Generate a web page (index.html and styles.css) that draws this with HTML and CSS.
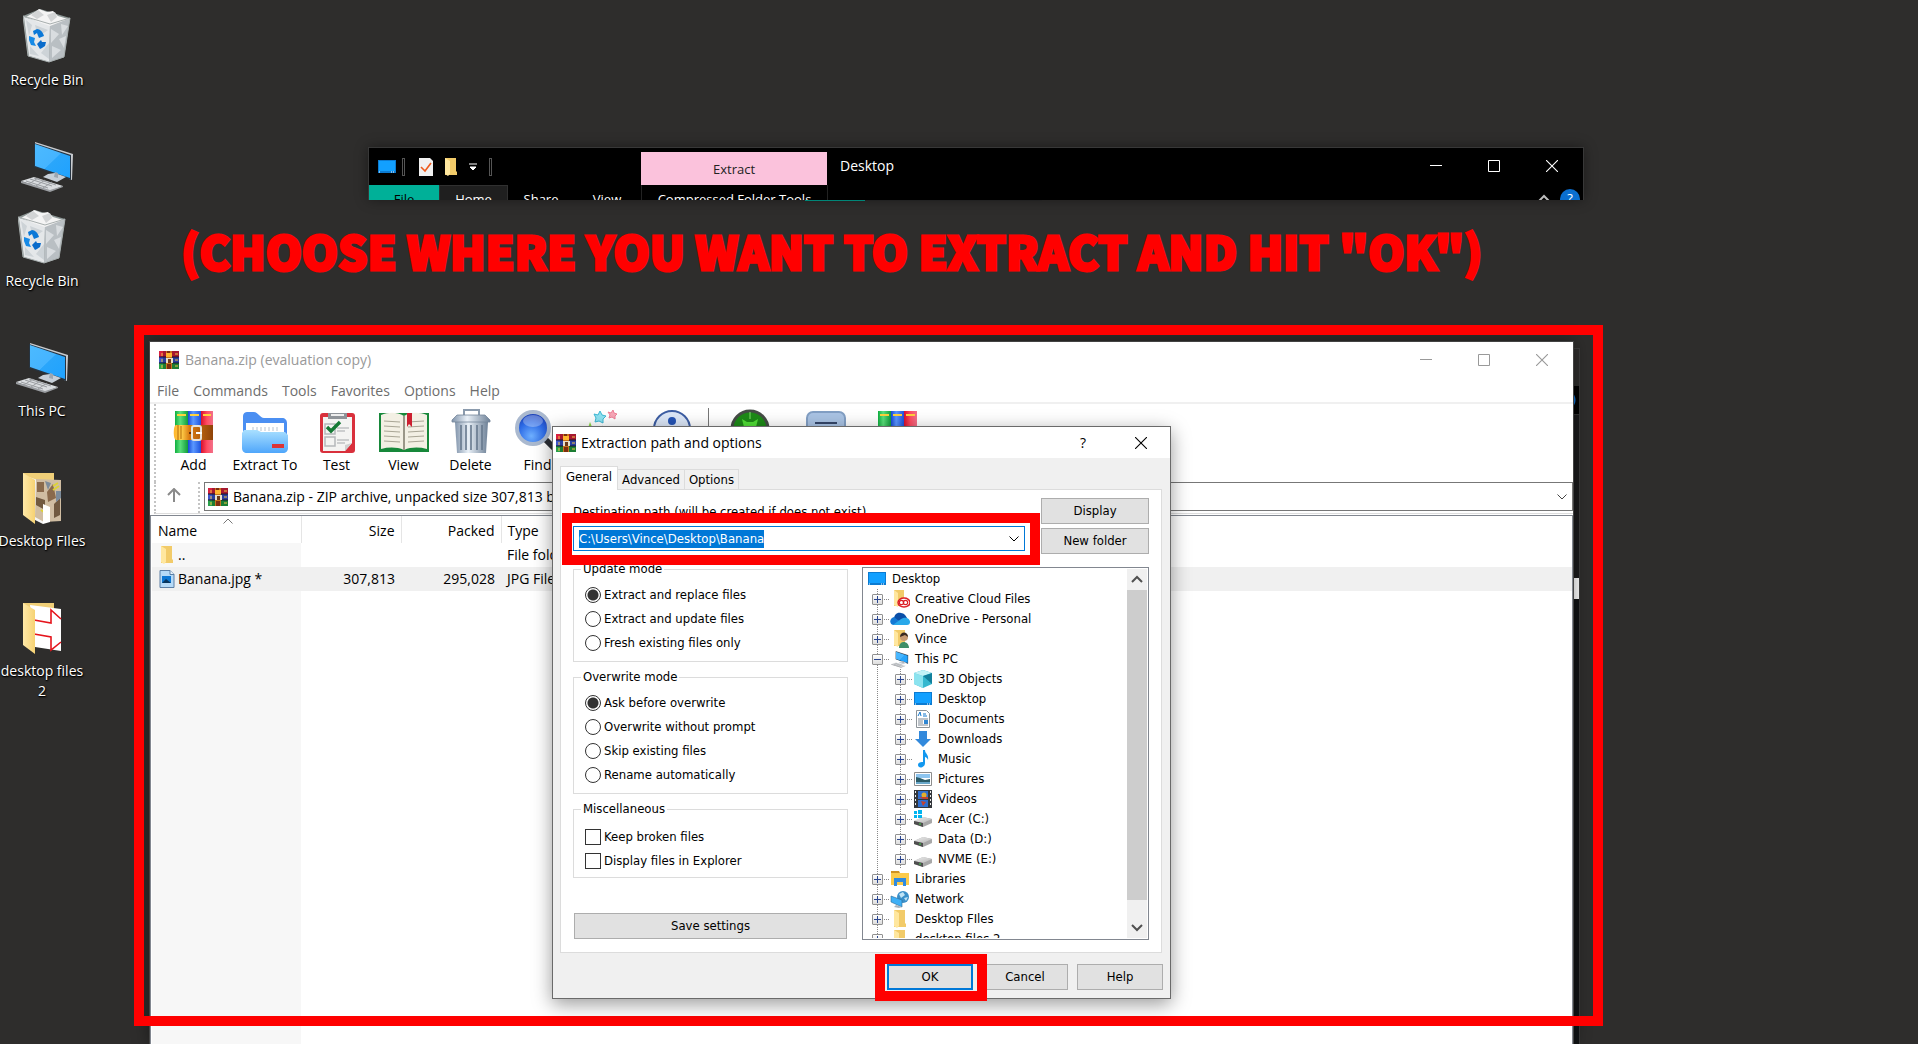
FILE: index.html
```html
<!DOCTYPE html>
<html lang="en">
<head>
    <meta charset="UTF-8">
    <meta name="viewport" content="width=device-width, initial-scale=1.0">
    <title>Extraction path and options</title>
    <link rel="stylesheet" href="styles.css">
</head>
<body>
    <!-- Shared icon shapes -->
    <svg class="sprite" width="0" height="0" aria-hidden="true">
        <defs>
            <linearGradient id="g-screen" x1="0" y1="0" x2="1" y2="1"><stop offset="0" stop-color="#4cbaff"/><stop offset=".5" stop-color="#45b4ff"/><stop offset=".51" stop-color="#2aa6fb"/><stop offset="1" stop-color="#1fa2ff"/></linearGradient>
            <linearGradient id="g-folder" x1="0" y1="0" x2="1" y2="0"><stop offset="0" stop-color="#ffe9a8"/><stop offset="1" stop-color="#f6d273"/></linearGradient>
            <linearGradient id="g-green" x1="0" y1="0" x2="1" y2="0"><stop offset="0" stop-color="#0fae3f"/><stop offset=".4" stop-color="#5be07b"/><stop offset="1" stop-color="#119a3b"/></linearGradient>
            <linearGradient id="g-blue" x1="0" y1="0" x2="1" y2="0"><stop offset="0" stop-color="#1749d8"/><stop offset=".4" stop-color="#5b98ff"/><stop offset="1" stop-color="#1e53dd"/></linearGradient>
            <linearGradient id="g-red" x1="0" y1="0" x2="1" y2="0"><stop offset="0" stop-color="#d90f2b"/><stop offset=".5" stop-color="#ff4d63"/><stop offset="1" stop-color="#f2718a"/></linearGradient>
            <linearGradient id="g-belt" x1="0" y1="0" x2="1" y2="0"><stop offset="0" stop-color="#ffb52b"/><stop offset=".2" stop-color="#ffcf4a"/><stop offset=".4" stop-color="#d97a10"/><stop offset="1" stop-color="#8f4309"/></linearGradient>
            <linearGradient id="g-ext" x1="0" y1="0" x2="0" y2="1"><stop offset="0" stop-color="#a9e0ff"/><stop offset="1" stop-color="#4fa6fb"/></linearGradient>
            <linearGradient id="g-metal" x1="0" y1="0" x2="1" y2="0"><stop offset="0" stop-color="#8194ab"/><stop offset=".4" stop-color="#e9f0f7"/><stop offset="1" stop-color="#6f8298"/></linearGradient>
            <radialGradient id="g-lens" cx=".45" cy=".75" r=".7"><stop offset="0" stop-color="#6fb0ff"/><stop offset=".6" stop-color="#2d6be6"/><stop offset="1" stop-color="#1b3fb5"/></radialGradient>
            <linearGradient id="g-drive" x1="0" y1="0" x2="1" y2="1"><stop offset="0" stop-color="#eee"/><stop offset="1" stop-color="#b5b5b5"/></linearGradient>

            <symbol id="i-bin" viewBox="0 0 48 54">
                <path d="M0 7l17-7 30 9-6 39-15 5-21-6z" fill="#8d9796"/>
                <path d="M1 8l26 8-1 37-20-6z" fill="#e4e7e9"/>
                <path d="M27 16l20-7-6 39-15 5z" fill="#b9bfc3"/>
                <path d="M3 8l9-5 4-3 8 3 6-1 5 5 10 3-18 7-12-4z" fill="#f4f4f4"/>
                <path d="M8 6l7-5 6 5-7 4zM24 6l8-3 2 5-6 5z" fill="#d2d4d5"/>
                <path d="M3 11l6 5-3 11zM12 16l13 5-10 7zM7 37l9 10-9-2zM18 44l8-10v16z" fill="#cdd3d7"/>
                <path d="M28 20l8 5-8 9zM38 15l7 2-6 9zM29 37l9 4-9 8zM36 30l7-3-2 12z" fill="#d9dde0"/>
                <path d="M0 7l27 8 20-6-6 39-15 5-21-6z" fill="none" stroke="#a7aeae" stroke-width="1"/>
                <path d="M10 22l4-2c3 0 6 3 7 7l-5 2-2-5-3 2z" fill="#0a78d7"/>
                <path d="M6 27l6 2-1 4 2 4-5-1-2-5z" fill="#168ae6"/>
                <path d="M14 35l4-4 1 2h4l-1 4-3 2-2 1z" fill="#0a6ccb"/>
            </symbol>
            <symbol id="i-pc" viewBox="0 0 54 54">
                <path d="M15 3l38 12-1 26-3-1V17L15 6z" fill="#c9ccd0"/>
                <path d="M14 4l37 12v25L14 28z" fill="#263442"/>
                <path d="M15 5l35 12v22L15 27z" fill="url(#g-screen)"/>
                <path d="M28 35l7-1 11 4-9 5-14-5z" fill="#c7cfd8"/>
                <path d="M35 33l3 1v5l-4-1z" fill="#9da6b0"/>
                <path d="M1 42l13-4 29 9-13 5z" fill="#dadde0"/>
                <path d="M6 42l22 7M10 40l22 7M14 39l22 7M9 45l9-6M16 47l9-6M23 49l9-6" stroke="#9a9da1" stroke-width="1" fill="none"/>
                <path d="M1 42l29 9 13-4v1l-13 5-29-9z" fill="#9b9ea2"/>
            </symbol>
            <symbol id="i-files" viewBox="0 0 54 54">
                <path d="M8 3h31v40H8z" fill="#f0cf78"/>
                <path d="M14 7l14 5v42l-14-7z" fill="#f4f4f4"/>
                <path d="M21 9l25 1v41l-17 1-9-5z" fill="#d0bda2"/>
                <path d="M22 12h7v10h-7zM32 22l6-8 3 14-8 4z" fill="#8a6a4c"/>
                <path d="M21 27l9 3v10l-9-5zM39 34l6-6v17l-6 3z" fill="#715940"/>
                <path d="M30 11l6 2-3 7zM41 21h5v7l-5 4z" fill="#7d8b9a"/>
                <path d="M38 16l5-3M38 20l6-4M26 40l6 4" stroke="#ddd234" stroke-width="2"/>
                <path d="M28 34l7 3v15l-7 2z" fill="#fff"/>
                <path d="M8 3l12 7v44L8 45z" fill="url(#g-folder)"/>
            </symbol>
            <symbol id="i-files2" viewBox="0 0 54 54">
                <path d="M8 3h31v40H8z" fill="#f0cf78"/>
                <path d="M15 5l31 4v42l-26-4z" fill="#fff"/>
                <path d="M19 20l17 3V10l10 9M19 34l17 3v13l10-8" fill="none" stroke="#e5141c" stroke-width="1.6"/>
                <path d="M8 3l12 7v44L8 45z" fill="url(#g-folder)"/>
            </symbol>
            <symbol id="i-folder" viewBox="0 0 18 18">
                <path d="M3 0h11v13l1 1v3H3z" fill="#f2cb69"/>
                <path d="M3 0l5 3v13l-2 2-3-2z" fill="#ffe79f"/>
            </symbol>
            <symbol id="i-screen" viewBox="0 0 18 14">
                <path d="M0 0h18v13H0z" fill="#0c7bd1"/><path d="M1 1h16v10H1z" fill="#12a0ff"/>
                <path d="M1 12h1M13 12h1M15 12h1" stroke="#fff"/>
            </symbol>
            <symbol id="i-rar" viewBox="0 0 20 18">
                <path d="M0 0h20v6H0z" fill="#a5182f"/><path d="M0 6h20v6H0z" fill="#2b3f9e"/><path d="M0 12h20v6H0z" fill="#1c7d33"/>
                <path d="M0 0h4v6H0z" fill="#d8213f"/><path d="M0 6h4v6H0z" fill="#3e55c9"/><path d="M0 12h4v6H0z" fill="#2aa04a"/>
                <path d="M0 6h20M0 12h20" stroke="#15152a" stroke-width="1"/>
                <path d="M7 0h6v18H7z" fill="#c9741d"/><path d="M8 0h3v3H8zM8 13h4v5H8z" fill="#7d2e10"/>
                <path d="M7 7h7v5H7z" fill="#e8e0cc"/><path d="M9 8h3v4H9z" fill="#6b3a1a"/>
                <path d="M7 2h6v4H7z" fill="#ffb62e"/>
                <path d="M3 2v3M3 8v3M3 14v3M16 3h3M16 9h3M16 15h3" stroke="#f4c542" stroke-width="1"/>
            </symbol>
            <symbol id="i-add" viewBox="0 0 52 46">
                <path d="M7 2h13v42H7z" fill="url(#g-green)"/><path d="M20 2h13v42H20z" fill="url(#g-blue)"/><path d="M33 2h12v42H33z" fill="url(#g-red)"/>
                <path d="M9 6h9M22 6h9M35 6h8" stroke="#ffd23c" stroke-width="2"/>
                <path d="M8 16h37v15H8c-3 0-3-15 0-15z" fill="url(#g-belt)"/>
                <path d="M10 16v15M13 17v13" stroke="#b36908"/>
                <circle cx="22" cy="24" r="1" fill="#4a1e00"/>
                <rect x="24" y="17" width="9" height="14" rx="2" fill="none" stroke="#e8e3da" stroke-width="2"/>
                <path d="M28 24h6" stroke="#fff" stroke-width="2"/>
            </symbol>
            <symbol id="i-extract" viewBox="0 0 52 46">
                <path d="M4 8c0-4 2-5 5-5h6c4 0 6 6 10 6h18c3 0 5 2 5 5v22H4z" fill="#4b8ff2"/>
                <path d="M7 14h38v14H7z" fill="#fff"/><path d="M14 18v4M18 18v4M22 18v4M26 18v4M30 18v4M34 18v4M38 18v4" stroke="#b9c4cf"/>
                <path d="M3 24l2-3h13l4 2h24l3 3v13c0 3-2 5-5 5H8c-3 0-5-2-5-5z" fill="url(#g-ext)"/>
                <path d="M33 35h12v4H33z" fill="#dd3434"/>
            </symbol>
            <symbol id="i-test" viewBox="0 0 52 46">
                <rect x="9" y="4" width="35" height="40" rx="3" fill="#d9303c"/>
                <path d="M12 8h29v26l-7 8H12z" fill="#f4f4f2"/><path d="M34 42v-6l7-2z" fill="#cfcfcf"/>
                <path d="M17 4h19v6H17z" fill="#8f9499"/><path d="M20 6h13" stroke="#eee" stroke-width="2"/>
                <path d="M14 15h10v10H14zM14 28h10v9H14z" fill="none" stroke="#b5b8bb" stroke-width="1.5"/>
                <path d="M16 18l4 4 9-9" fill="none" stroke="#157a35" stroke-width="3.4"/>
                <path d="M26 19h12M26 22h8M26 31h12M26 34h8" stroke="#a5a8ab"/>
            </symbol>
            <symbol id="i-view" viewBox="0 0 52 46">
                <path d="M1 4h50v39H1z" fill="#17883a"/>
                <path d="M3 6c8-3 16-3 23 1v34c-7-3-15-3-23-1zM49 6c-8-3-16-3-23 1v34c7-3 15-3 23-1z" fill="#f3f0e4"/>
                <path d="M26 7v34" stroke="#9a9788" stroke-width="2"/>
                <path d="M6 12l16 1M6 17l16 1M6 22l16 1M6 27l16 1M6 32l16 1M30 13l16-1M30 18l16-1M30 23l16-1M30 28l16-1M30 33l16-1" stroke="#a9a695"/>
                <path d="M29 4h5v14l-3-3-2 3z" fill="#cc2030"/>
            </symbol>
            <symbol id="i-delete" viewBox="0 0 52 46">
                <path d="M19 7V1h15v6" fill="none" stroke="#8b9bad" stroke-width="2"/>
                <path d="M10 13h33l-2 31H12z" fill="url(#g-metal)"/>
                <path d="M16 16v25M21 16v25M26 16v25M32 16v25M37 16v25" stroke="#66788d" stroke-width="1.6"/>
                <path d="M12 6h28l5 5v2H7v-2z" fill="url(#g-metal)" stroke="#73859a" stroke-width=".8"/>
            </symbol>
            <symbol id="i-find" viewBox="0 0 52 46">
                <path d="M33 30l12 12" stroke="#2c2f36" stroke-width="6"/><circle cx="21" cy="19" r="16" fill="url(#g-lens)" stroke="#aab9cf" stroke-width="4"/>
                <ellipse cx="21" cy="12" rx="10" ry="6" fill="#fff" opacity=".3"/>
            </symbol>
            <symbol id="i-wizard" viewBox="0 0 52 46">
                <path d="M21 2l2 4 4 1-3 3v4l-4-2-4 1 1-4-2-4 4 1z" fill="#8fe3f2" stroke="#3cb8d5"/>
                <path d="M34 1l1 3 3 1-2 2v3l-3-2-3 1 1-3-2-3 3 1z" fill="#f7a8b8" stroke="#ee7f96"/>
                <path d="M11 13l2 5 5 1-5 4-4-4z" fill="#8edb49"/><path d="M22 18L44 42" stroke="#333" stroke-width="4"/>
            </symbol>
            <symbol id="i-info" viewBox="0 0 52 46">
                <circle cx="26" cy="20" r="18" fill="#dbe6f7" stroke="#3c5da3" stroke-width="2"/><circle cx="26" cy="12" r="4" fill="#2453b5"/><path d="M20 20h10v16h-8z" fill="#2453b5"/>
            </symbol>
            <symbol id="i-virus" viewBox="0 0 52 46">
                <circle cx="26" cy="20" r="18" fill="#1d8a17" stroke="#454c46" stroke-width="3"/><path d="M26 3v7" stroke="#80df6c"/><path d="M18 10l5 3h6l5-3-2 8H20z" fill="#50df36"/>
            </symbol>
            <symbol id="i-comment" viewBox="0 0 52 46">
                <rect x="7" y="3" width="38" height="34" rx="6" fill="#a9c3e4" stroke="#829fc4" stroke-width="2"/><path d="M15 14h22" stroke="#35476a" stroke-width="2"/>
            </symbol>
            <symbol id="i-sfx" viewBox="0 0 52 46">
                <path d="M6 2h13v42H6z" fill="url(#g-green)"/><path d="M19 2h13v42H19z" fill="url(#g-blue)"/><path d="M32 2h13v42H32z" fill="url(#g-red)"/><path d="M8 6h9M21 6h9M34 6h9" stroke="#ffd23c" stroke-width="2"/>
            </symbol>
            <symbol id="i-jpg" viewBox="0 0 18 18">
                <path d="M2 .5h10l4 4v13H2z" fill="#b6daf7" stroke="#5c7fa5"/><path d="M12 .5v4h4" fill="#e8f4fd" stroke="#5c7fa5"/><path d="M4 6h9v7H4z" fill="#0e77d3"/><path d="M4 13l4-4 5 4z" fill="#08365f"/>
            </symbol>
            <symbol id="i-cc" viewBox="0 0 20 18">
                <path d="M4 0h10v16H4z" fill="#f2cb69"/><path d="M4 0l4 3v14l-4-2z" fill="#ffe79f"/>
                <ellipse cx="14" cy="12.500" rx="6" ry="4.500" fill="#fff" stroke="#dc1f26" stroke-width="1.500"/><circle cx="11.500" cy="12.500" r="2.200" fill="none" stroke="#dc1f26" stroke-width="1.200"/><circle cx="15.500" cy="12.500" r="2.200" fill="none" stroke="#dc1f26" stroke-width="1.200"/>
            </symbol>
            <symbol id="i-onedrive" viewBox="0 0 20 18">
                <path d="M4 9c0-4 3-7 7-6 3 0 5 3 6 5l-6 4z" fill="#0a4fa8"/><path d="M4 15c-5 0-5-7 0-8l10 8z" fill="#1478d4"/><path d="M3 15l8-6c5-3 9 0 9 3 0 2-1 3-3 3z" fill="#28a8ea"/>
            </symbol>
            <symbol id="i-user" viewBox="0 0 20 18">
                <path d="M4 0h11v16H4z" fill="#f2cb69"/><path d="M4 0l4 3v14l-4-2z" fill="#ffe79f"/>
                <path d="M9 18c0-5 3-6 5-6s5 2 5 6z" fill="#3f8f68"/><circle cx="14" cy="7" r="4" fill="#c79a72"/><path d="M10 7c0-6 8-6 8 0l-3-2z" fill="#3a2a22"/>
            </symbol>
            <symbol id="i-cube" viewBox="0 0 18 18">
                <path d="M9 0l9 3v11l-9 4-9-4V3z" fill="#35b8cf"/><path d="M0 3l9 3v12l-9-4z" fill="#8be3ef"/><path d="M0 3l9-3 9 3-9 3z" fill="#c2f2f7"/><path d="M9 6l9-3v11z" fill="#12809d"/>
            </symbol>
            <symbol id="i-doc" viewBox="0 0 18 18">
                <path d="M2.500.5h10l3 3v14h-13z" fill="#fff" stroke="#8d9499"/><path d="M4 6l2-4 1 4M9 4h3M9 6h4" stroke="#1377cc" fill="none"/><path d="M4 9h10M4 11h5M4 13h5M4 15h10" stroke="#7d8894"/><path d="M10 10h4v4h-4z" fill="#2d86d3"/>
            </symbol>
            <symbol id="i-down" viewBox="0 0 18 18"><path d="M5 1h8v8h4l-8 8-8-8h4z" fill="#3289dc"/></symbol>
            <symbol id="i-music" viewBox="0 0 18 18"><path d="M9 0h2c0 4 4 4 3 10-1-3-3-3-3-3v6c0 5-7 6-7 2 0-3 4-3 5-3z" fill="#1398ef"/></symbol>
            <symbol id="i-pic" viewBox="0 0 18 14"><path d="M.5.5h17v13H.5z" fill="#fff" stroke="#8d8d8d"/><path d="M2 2h14v4H2z" fill="#8ec5ef"/><path d="M2 5l4 1 5 2 5-1v5H2z" fill="#2b5c68"/><path d="M2 10h14v2H2z" fill="#6ba9cb"/></symbol>
            <symbol id="i-video" viewBox="0 0 18 18">
                <path d="M0 0h18v18H0z" fill="#33373c"/><path d="M4 1h10v8H4zM4 10h10v7H4z" fill="#2f6fd0"/><circle cx="10" cy="5" r="2.500" fill="#e5ae2b"/><path d="M5 7l4 2h5V7zM7 11l5 1-3 4z" fill="#c5412f"/><path d="M1.500 1v16M16.500 1v16" stroke="#eee" stroke-dasharray="2 2"/>
            </symbol>
            <symbol id="i-drive" viewBox="0 0 18 18"><path d="M0 11l9-4 9 2v4l-9 4-9-3z" fill="#a8a8a8"/><path d="M0 11l9-4 9 2-9 4z" fill="url(#g-drive)"/><path d="M0 11l9 2v4l-9-3z" fill="#4e4e4e"/><path d="M5 14h2" stroke="#42d34a"/></symbol>
            <symbol id="i-cdrive" viewBox="0 0 18 18"><use href="#i-drive" width="18" height="18"/><path d="M0 1h3v3H0zM4 0h4v4H4zM0 5h3v3H0zM4 5h4v3H4z" fill="#00b4f0"/></symbol>
            <symbol id="i-lib" viewBox="0 0 18 18"><path d="M0 1h8l1 2H0z" fill="#d09323"/><path d="M0 3h18v12H0z" fill="#fccb4b"/><path d="M3 8h12v8h-3v-4H6v4H3z" fill="#2f8be0"/></symbol>
            <symbol id="i-net" viewBox="0 0 18 18"><circle cx="12" cy="7" r="6" fill="#3a8fc9"/><path d="M8 4l4-2 2 3-4 3zM13 8l4-1-2 4z" fill="#bfe3f5"/><path d="M0 6l11 4v7L0 12z" fill="#3eb0f7" stroke="#2d6b96" stroke-width=".6"/><path d="M5 15l6 2-3 1-5-1z" fill="#aab4bd"/></symbol>

            <symbol id="i-min" viewBox="0 0 12 12"><path d="M0 5.500h12" stroke="currentColor"/></symbol>
            <symbol id="i-max" viewBox="0 0 12 12"><path d="M.5.5h11v11H.5z" stroke="currentColor" fill="none"/></symbol>
            <symbol id="i-close" viewBox="0 0 12 12"><path d="M0 0l12 12M12 0L0 12" stroke="currentColor" stroke-width="1.100"/></symbol>
            <symbol id="i-chev" viewBox="0 0 10 6"><path d="M.5.5L5 5 9.500.5" stroke="currentColor" fill="none"/></symbol>
        </defs>
    </svg>

    <main class="desktop">
        <div class="icons icons-back">
            <a class="icon" href="#"><svg width="48" height="54"><use href="#i-bin"/></svg><span>Recycle Bin</span></a>
            <a class="icon" href="#" aria-label="This PC"><svg width="54" height="54"><use href="#i-pc"/></svg></a>
        </div>
        <div class="icons icons-front">
            <a class="icon" href="#"><svg width="48" height="54"><use href="#i-bin"/></svg><span>Recycle Bin</span></a>
            <a class="icon" href="#"><svg width="54" height="54"><use href="#i-pc"/></svg><span>This PC</span></a>
            <a class="icon" href="#"><svg width="54" height="54"><use href="#i-files"/></svg><span>Desktop FIles</span></a>
            <a class="icon" href="#"><svg width="54" height="54"><use href="#i-files2"/></svg><span>desktop files<br>2</span></a>
        </div>

        <!-- Explorer window -->
        <section class="explorer">
            <div class="explorer-title">
                <div class="quick">
                    <svg width="18" height="14"><use href="#i-screen"/></svg>
                    <i class="bar"></i>
                    <svg class="check" width="14" height="18" viewBox="0 0 14 18"><path d="M0 0h11l3 3v15H0z" fill="#f1f1f1"/><path d="M2 9l4 4 6-8" fill="none" stroke="#ee5a1c" stroke-width="1.600"/></svg>
                    <svg width="18" height="18"><use href="#i-folder"/></svg>
                    <svg width="8" height="8" viewBox="0 0 8 8"><path d="M0 1h8M1 4h6L4 7z" stroke="#fff" fill="#fff" stroke-width="1"/></svg>
                    <i class="bar"></i>
                </div>
                <div class="extract-tab">Extract</div>
                <div class="explorer-name">Desktop</div>
                <div class="win-buttons">
                    <button aria-label="Minimize"><svg width="12" height="12"><use href="#i-min"/></svg></button>
                    <button aria-label="Maximize"><svg width="12" height="12"><use href="#i-max"/></svg></button>
                    <button aria-label="Close"><svg width="12" height="12"><use href="#i-close"/></svg></button>
                </div>
            </div>
            <nav class="ribbon">
                <a class="file" href="#">File</a>
                <a class="home" href="#">Home</a>
                <a href="#">Share</a>
                <a href="#">View</a>
                <a class="tools" href="#">Compressed Folder Tools</a>
                <svg class="up" width="12" height="8" viewBox="0 0 12 8"><path d="M1 7l5-5 5 5" fill="none" stroke="#bbb" stroke-width="2"/></svg>
                <span class="help">?</span>
            </nav>
        </section>
        <div class="ribbon-line"></div>

        <h1 class="headline">(CHOOSE WHERE YOU WANT TO EXTRACT AND HIT "OK")</h1>

        <div class="behind"><div class="behind-ribbon"></div><div class="behind-body"></div><div class="behind-scroll"></div></div>

        <!-- Archive window -->
        <section class="archive">
            <header class="archive-title">
                <svg width="20" height="18"><use href="#i-rar"/></svg>
                <span>Banana.zip (evaluation copy)</span>
                <div class="win-buttons">
                    <button aria-label="Minimize"><svg width="12" height="12"><use href="#i-min"/></svg></button>
                    <button aria-label="Maximize"><svg width="12" height="12"><use href="#i-max"/></svg></button>
                    <button aria-label="Close"><svg width="12" height="12"><use href="#i-close"/></svg></button>
                </div>
            </header>
            <nav class="menu">
                <a href="#">File</a><a href="#">Commands</a><a href="#">Tools</a><a href="#">Favorites</a><a href="#">Options</a><a href="#">Help</a>
            </nav>
            <div class="toolbar">
                <button><svg width="52" height="46"><use href="#i-add"/></svg>Add</button>
                <button class="wide"><svg width="52" height="46"><use href="#i-extract"/></svg>Extract To</button>
                <button><svg width="52" height="46"><use href="#i-test"/></svg>Test</button>
                <button><svg width="52" height="46"><use href="#i-view"/></svg>View</button>
                <button><svg width="52" height="46"><use href="#i-delete"/></svg>Delete</button>
                <button><svg width="52" height="46"><use href="#i-find"/></svg>Find</button>
                <button aria-label="Wizard"><svg width="52" height="46"><use href="#i-wizard"/></svg></button>
                <button aria-label="Info"><svg width="52" height="46"><use href="#i-info"/></svg></button>
                <i class="sep"></i>
                <button class="wide" aria-label="VirusScan"><svg width="52" height="46"><use href="#i-virus"/></svg></button>
                <button class="wide" aria-label="Comment"><svg width="52" height="46"><use href="#i-comment"/></svg></button>
                <button aria-label="SFX"><svg width="52" height="46"><use href="#i-sfx"/></svg></button>
            </div>
            <div class="address-row">
                <button class="up-button" aria-label="Up"><svg width="14" height="15" viewBox="0 0 14 15"><path d="M7 14V1M1 7l6-6 6 6" fill="none" stroke="#8a8a8a" stroke-width="2"/></svg></button>
                <div class="address">
                    <svg width="20" height="18"><use href="#i-rar"/></svg>
                    <select aria-label="Address"><option>Banana.zip - ZIP archive, unpacked size 307,813 bytes</option></select>
                    <svg class="chev" width="10" height="6"><use href="#i-chev"/></svg>
                </div>
            </div>
            <div class="list">
                <table class="files">
                    <colgroup><col class="c-name"><col class="c-num"><col class="c-num"><col></colgroup>
                    <thead>
                        <tr><th>Name<svg class="sort" width="10" height="6" viewBox="0 0 10 6"><path d="M.5 5.500L5 1l4.500 4.500" fill="none" stroke="#777"/></svg></th><th class="num">Size</th><th class="num">Packed</th><th>Type</th></tr>
                    </thead>
                    <tbody>
                        <tr><td><svg width="18" height="18"><use href="#i-folder"/></svg>..</td><td></td><td></td><td>File folder</td></tr>
                        <tr class="selected"><td><svg width="18" height="18"><use href="#i-jpg"/></svg>Banana.jpg *</td><td class="num">307,813</td><td class="num">295,028</td><td>JPG File</td></tr>
                    </tbody>
                </table>
                <div class="name-fill"></div>
            </div>
        </section>

        <div class="frame"></div>

        <!-- Extraction dialog -->
        <form class="dialog">
            <header class="dialog-title">
                <svg width="20" height="18"><use href="#i-rar"/></svg>
                <span>Extraction path and options</span>
                <button type="button">?</button>
                <button type="button" aria-label="Close"><svg width="12" height="12"><use href="#i-close"/></svg></button>
            </header>
            <div class="dialog-body">
                <div class="tabs">
                    <button type="button" class="tab active">General</button>
                    <button type="button" class="tab">Advanced</button>
                    <button type="button" class="tab">Options</button>
                </div>
                <div class="panel">
                    <div class="path-row">
                        <div class="path">
                            <label for="path">Destination path (will be created if does not exist)</label>
                            <div class="combo">
                                <input type="text" id="path" value="C:\Users\Vince\Desktop\Banana">
                                <button type="button" aria-label="Recent paths"><svg width="10" height="6"><use href="#i-chev"/></svg></button>
                                <i class="mark mark-path"></i>
                            </div>
                        </div>
                        <div class="path-buttons">
                            <button type="button" class="btn">Display</button>
                            <button type="button" class="btn">New folder</button>
                        </div>
                    </div>
                    <div class="columns">
                        <div class="settings">
                            <fieldset>
                                <legend>Update mode</legend>
                                <label><input type="radio" name="update" checked>Extract and replace files</label>
                                <label><input type="radio" name="update">Extract and update files</label>
                                <label><input type="radio" name="update">Fresh existing files only</label>
                            </fieldset>
                            <fieldset>
                                <legend>Overwrite mode</legend>
                                <label><input type="radio" name="overwrite" checked>Ask before overwrite</label>
                                <label><input type="radio" name="overwrite">Overwrite without prompt</label>
                                <label><input type="radio" name="overwrite">Skip existing files</label>
                                <label><input type="radio" name="overwrite">Rename automatically</label>
                            </fieldset>
                            <fieldset class="misc">
                                <legend>Miscellaneous</legend>
                                <label><input type="checkbox">Keep broken files</label>
                                <label><input type="checkbox">Display files in Explorer</label>
                            </fieldset>
                            <button type="button" class="btn save">Save settings</button>
                        </div>
                        <div class="tree-box">
                            <div class="tree">
                                <div class="root"><svg width="18" height="14"><use href="#i-screen"/></svg>Desktop</div>
                                <ul>
                                    <li><div class="node"><button type="button" class="plus" aria-label="Expand"></button><svg width="20" height="18"><use href="#i-cc"/></svg>Creative Cloud Files</div></li>
                                    <li><div class="node"><button type="button" class="plus" aria-label="Expand"></button><svg width="20" height="18"><use href="#i-onedrive"/></svg>OneDrive - Personal</div></li>
                                    <li><div class="node"><button type="button" class="plus" aria-label="Expand"></button><svg width="20" height="18"><use href="#i-user"/></svg>Vince</div></li>
                                    <li>
                                        <div class="node"><button type="button" class="plus minus" aria-label="Collapse"></button><svg width="20" height="18"><use href="#i-pc"/></svg>This PC</div>
                                        <ul>
                                            <li><div class="node"><button type="button" class="plus" aria-label="Expand"></button><svg width="20" height="18"><use href="#i-cube"/></svg>3D Objects</div></li>
                                            <li><div class="node"><button type="button" class="plus" aria-label="Expand"></button><svg width="20" height="14"><use href="#i-screen"/></svg>Desktop</div></li>
                                            <li><div class="node"><button type="button" class="plus" aria-label="Expand"></button><svg width="20" height="18"><use href="#i-doc"/></svg>Documents</div></li>
                                            <li><div class="node"><button type="button" class="plus" aria-label="Expand"></button><svg width="20" height="18"><use href="#i-down"/></svg>Downloads</div></li>
                                            <li><div class="node"><button type="button" class="plus" aria-label="Expand"></button><svg width="20" height="18"><use href="#i-music"/></svg>Music</div></li>
                                            <li><div class="node"><button type="button" class="plus" aria-label="Expand"></button><svg width="20" height="14"><use href="#i-pic"/></svg>Pictures</div></li>
                                            <li><div class="node"><button type="button" class="plus" aria-label="Expand"></button><svg width="20" height="18"><use href="#i-video"/></svg>Videos</div></li>
                                            <li><div class="node"><button type="button" class="plus" aria-label="Expand"></button><svg width="20" height="18"><use href="#i-cdrive"/></svg>Acer (C:)</div></li>
                                            <li><div class="node"><button type="button" class="plus" aria-label="Expand"></button><svg width="20" height="18"><use href="#i-drive"/></svg>Data (D:)</div></li>
                                            <li><div class="node"><button type="button" class="plus" aria-label="Expand"></button><svg width="20" height="18"><use href="#i-drive"/></svg>NVME (E:)</div></li>
                                        </ul>
                                    </li>
                                    <li><div class="node"><button type="button" class="plus" aria-label="Expand"></button><svg width="20" height="18"><use href="#i-lib"/></svg>Libraries</div></li>
                                    <li><div class="node"><button type="button" class="plus" aria-label="Expand"></button><svg width="20" height="18"><use href="#i-net"/></svg>Network</div></li>
                                    <li><div class="node"><button type="button" class="plus" aria-label="Expand"></button><svg width="20" height="18"><use href="#i-folder"/></svg>Desktop FIles</div></li>
                                    <li><div class="node"><button type="button" class="plus" aria-label="Expand"></button><svg width="20" height="18"><use href="#i-folder"/></svg>desktop files 2</div></li>
                                </ul>
                            </div>
                            <div class="scrollbar">
                                <svg width="12" height="8" viewBox="0 0 12 8"><path d="M1 7l5-5 5 5" fill="none" stroke="#505050" stroke-width="2"/></svg>
                                <i></i>
                                <svg width="12" height="8" viewBox="0 0 12 8"><path d="M1 1l5 5 5-5" fill="none" stroke="#505050" stroke-width="2"/></svg>
                            </div>
                        </div>
                    </div>
                </div>
                <div class="footer">
                    <div class="ok-wrap"><button type="button" class="btn ok">OK</button><i class="mark mark-ok"></i></div>
                    <button type="button" class="btn">Cancel</button>
                    <button type="button" class="btn">Help</button>
                </div>
            </div>
        </form>
    </main>
</body>
</html>
```
FILE: styles.css
```css
:root {
    --desk: #2e2d2c;
    --red: #ff0000;
    --line: #dcdcdc;
    --ui: "Segoe UI", "Open Sans", "Noto Sans", sans-serif;
    --small: Tahoma, "DejaVu Sans Condensed", "Noto Sans", sans-serif;
}

* {
    box-sizing: border-box;
    margin: 0;
    padding: 0;
}

body {
    background-color: var(--desk);
    font-family: var(--ui);
    font-size: 14px;
    line-height: 20px;
    color: #000;
}

a {
    color: inherit;
    text-decoration: none;
}

button, input, select {
    font: inherit;
    color: inherit;
    border: none;
    background: none;
}

svg {
    flex: none;
}

.sprite {
    position: absolute;
}

.desktop {
    position: relative;
    height: 100vh;
    overflow: hidden;
}

/* Desktop icons */
.icons {
    position: absolute;
    display: grid;
    grid-auto-rows: 130px;
    width: 88px;
}

.icons-back {
    left: 3px;
    top: 9px;
    height: 191px;
    overflow: hidden;
}

.icons-front {
    left: -2px;
    top: 210px;
}

.icon {
    display: flex;
    flex-direction: column;
    align-items: center;
    gap: 7px;
    color: #fff;
    text-align: center;
    white-space: nowrap;
    text-shadow: 1px 1px 2px #000, 0 1px 1px #000;
}

/* Explorer window */
.explorer {
    position: absolute;
    left: 368px;
    right: 334px;
    top: 147px;
    height: 53px;
    overflow: hidden;
    background-color: #000;
    border: 1px solid #383838;
    border-bottom: none;
    color: #fff;
    box-shadow: 0 0 12px rgba(0, 0, 0, 0.4);
}

.explorer-title {
    display: flex;
    align-items: flex-end;
    height: 37px;
}

.quick {
    display: flex;
    align-items: center;
    gap: 9px;
    width: 272px;
    height: 37px;
    padding-left: 9px;
}

.quick .bar {
    width: 3px;
    height: 18px;
    margin-left: -3px;
    border: 1px solid #555;
}

.quick .check {
    margin-left: 5px;
}

.quick .bar:last-child {
    margin-left: 3px;
}

.extract-tab {
    width: 186px;
    height: 33px;
    background-color: #fbc2dc;
    color: #222;
    font-size: 13px;
    line-height: 35px;
    text-align: center;
}

.explorer-name {
    height: 37px;
    padding-left: 13px;
    line-height: 36px;
}

.win-buttons {
    display: flex;
    align-items: center;
    height: 36px;
    margin-left: auto;
    padding-right: 2px;
}

.explorer .win-buttons {
    align-self: flex-start;
}

.win-buttons button {
    display: grid;
    place-items: center;
    width: 58px;
    height: 36px;
}

.ribbon {
    display: flex;
    height: 38px;
    font-size: 13px;
    line-height: 28px;
    text-align: center;
}

.ribbon a {
    width: 66px;
}

.ribbon a.file {
    width: 70px;
    background-color: #00b098;
    color: #000;
}

.ribbon a.home {
    width: 69px;
    background-color: #1f1f1f;
    border: 1px solid #303030;
    line-height: 26px;
}

.ribbon a.tools {
    width: 187px;
    margin-left: 1px;
    border: 1px solid #222;
    border-top: none;
}

.ribbon .up {
    margin: 9px 10px 0 auto;
}

.ribbon .help {
    width: 20px;
    height: 20px;
    margin: 4px 3px 0 0;
    border-radius: 50%;
    background-color: #0a6fd0;
    line-height: 19px;
}

.ribbon-line {
    position: absolute;
    left: 805px;
    top: 200px;
    width: 237px;
    height: 1px;
    background: linear-gradient(to right, #008577 60px, #222 60px);
}

.headline {
    position: absolute;
    left: 181px;
    top: 200px;
    color: var(--red);
    font-family: Impact, "Noto Sans CJK JP", sans-serif;
    font-size: 46px;
    font-weight: 900;
    line-height: 100px;
    white-space: nowrap;
    -webkit-text-stroke: 3px var(--red);
}

/* Sliver of the window behind the archive */
.behind {
    position: absolute;
    left: 1000px;
    right: 338px;
    top: 348px;
    bottom: 0;
    display: flex;
    flex-direction: column;
    border: 1px solid #3d3d3d;
    border-bottom: none;
    background-color: #111315;
}

.behind::before {
    content: "";
    height: 37px;
    background-color: var(--desk);
}

.behind-ribbon {
    height: 29px;
    background: radial-gradient(circle at calc(100% - 13px) 14px, #0a6fd0 9px, #000 10px);
    border-bottom: 1px solid #333;
}

.behind-body {
    height: 163px;
    background-color: #1b1b1c;
}

/* lighter than it shows, the archive shadow falls on it */
.behind-scroll {
    height: 21px;
    background-color: #fff;
}

/* Archive window */
.archive {
    position: absolute;
    left: 149px;
    right: 344px;
    top: 341px;
    bottom: 0;
    display: flex;
    flex-direction: column;
    background-color: #fff;
    border: 1px solid #434343;
    border-bottom: none;
    box-shadow: 0 0 16px rgba(0, 0, 0, 0.4);
}

.archive-title {
    display: flex;
    align-items: center;
    gap: 6px;
    height: 36px;
    padding-left: 9px;
    color: #999;
}

.menu {
    display: flex;
    gap: 14px;
    height: 26px;
    padding-left: 7px;
    border-bottom: 2px solid #f0f0f0;
    color: #6d6d6d;
    line-height: 26px;
}

.toolbar {
    display: flex;
    height: 78px;
    margin-left: 4px;
    padding-left: 4px;
    border-left: 2px dotted #c4c4c4;
}

.toolbar button {
    display: flex;
    flex-direction: column;
    align-items: center;
    width: 67px;
    padding-top: 5px;
}

.toolbar button.wide {
    width: 76px;
}

.toolbar .sep {
    width: 1px;
    height: 60px;
    margin: 4px 3px;
    background-color: #777;
}

.address-row {
    display: flex;
    height: 32px;
    margin-left: 4px;
    border-left: 2px dotted #c4c4c4;
    border-bottom: 1px solid #ddd;
}

.up-button {
    width: 44px;
    padding-right: 6px;
    border-right: 2px dotted #c4c4c4;
}

.address {
    display: flex;
    flex: 1;
    align-items: center;
    gap: 5px;
    height: 29px;
    margin-left: 4px;
    padding: 0 5px 0 3px;
    border: 1px solid #777;
}

.address select {
    flex: 1;
    appearance: none;
}

.address .chev {
    color: #444;
}

.list {
    display: flex;
    flex: 1;
    flex-direction: column;
    margin-top: 1px;
    border: 1px solid #828790;
    border-bottom: none;
    padding-left: 1px;
}

.files {
    width: 100%;
    border-collapse: collapse;
    table-layout: fixed;
}

.c-name {
    width: 149px;
}

.c-num {
    width: 100px;
}

.files th {
    position: relative;
    height: 27px;
    padding: 3px 6px 0;
    border-right: 1px solid #e5e5e5;
    font-weight: normal;
    text-align: left;
}

.files th:last-child {
    border-right: none;
}

.files td {
    height: 24px;
    padding: 0 6px;
}

.files th.num,
.files td.num {
    text-align: right;
}

.files td:first-child {
    display: flex;
    align-items: center;
    gap: 2px;
    background-color: #f7f7f7;
}

.files .selected,
.files .selected td:first-child {
    background-color: #f0f0f0;
}

.sort {
    position: absolute;
    left: 71px;
    top: 2px;
}

.name-fill {
    flex: 1;
    width: 149px;
    background-color: #f7f7f7;
}

.frame {
    position: absolute;
    left: 134px;
    right: 315px;
    top: 325px;
    bottom: 18px;
    border: 10px solid var(--red);
}

/* Extraction dialog */
.dialog {
    position: absolute;
    left: 552px;
    top: 426px;
    width: 619px;
    background-color: #f0f0f0;
    border: 1px solid #6a6a6a;
    box-shadow: 0 5px 18px rgba(0, 0, 0, 0.4);
    font-family: var(--small);
    font-size: 13px;
    line-height: 18px;
}

.dialog-title {
    display: flex;
    align-items: center;
    height: 31px;
    padding-left: 3px;
    background-color: #fff;
    font-family: var(--ui);
    font-size: 14px;
}

.dialog-title span {
    flex: 1;
    padding-left: 5px;
}

.dialog-title button {
    display: grid;
    place-items: center;
    width: 58px;
    height: 31px;
}

.dialog-body {
    padding: 8px 8px 8px 7px;
}

.tabs {
    display: flex;
    align-items: flex-end;
    height: 24px;
}

.tab {
    height: 21px;
    padding: 0 4px;
    border: 1px solid var(--line);
    border-left: none;
}

.tab.active {
    position: relative;
    height: 24px;
    padding: 0 5px 3px;
    border-left: 1px solid var(--line);
    border-bottom: none;
    background-color: #fff;
}

.panel {
    margin-top: -1px;
    padding: 8px 12px 12px;
    background-color: #fff;
    border: 1px solid var(--line);
}

.path-row {
    display: flex;
    gap: 16px;
}

.path {
    flex: 1;
    padding-top: 5px;
}

.path label {
    display: block;
}

.combo {
    position: relative;
    display: flex;
    align-items: center;
    justify-content: space-between;
    height: 25px;
    margin-top: 5px;
    padding: 0 5px;
    border: 1px solid #0078d7;
}

.combo input {
    height: 18px;
    field-sizing: content;
    background-color: #0078d7;
    color: #fff;
}

.combo button {
    display: grid;
    place-items: center;
    width: 10px;
    height: 20px;
}

.mark {
    position: absolute;
    border: 10px solid var(--red);
    pointer-events: none;
}

.mark-path {
    inset: -14px -16px -15px -12px;
}

.mark-ok {
    inset: -10px -14px -11px -12px;
}

.path-buttons {
    display: grid;
    gap: 4px;
    width: 108px;
}

.btn {
    height: 26px;
    background-color: #e1e1e1;
    border: 1px solid #adadad;
}

.columns {
    display: flex;
    gap: 14px;
    margin-top: 7px;
}

.settings {
    display: flex;
    flex-direction: column;
    gap: 7px;
    width: 275px;
}

fieldset {
    padding: 6px 11px;
    border: 1px solid var(--line);
}

legend {
    margin-left: -4px;
    padding: 0 2px;
    line-height: 16px;
}

fieldset label {
    display: flex;
    align-items: center;
    gap: 3px;
    height: 24px;
}

fieldset input {
    appearance: none;
    width: 16px;
    height: 16px;
    border: 1px solid #333;
    background-color: #fff;
}

fieldset input[type="radio"] {
    border-radius: 50%;
}

fieldset input[type="radio"]:checked {
    background: radial-gradient(circle, #333 5px, #fff 6px);
}

.misc {
    padding: 8px 11px 4px;
}

.save {
    margin: 28px 1px 0;
}

.tree-box {
    display: flex;
    flex: 1;
    height: 373px;
    margin-top: 6px;
    padding: 1px;
    border: 1px solid #828790;
}

.tree {
    flex: 1;
    overflow: hidden;
    padding-left: 4px;
}

.root,
.node {
    display: flex;
    align-items: center;
    height: 20px;
    white-space: nowrap;
}

.root {
    gap: 6px;
}

/* dotted branch lines */
.tree ul {
    list-style: none;
    background: repeating-linear-gradient(to bottom, #888 0 1px, transparent 1px 2px) 9px 0 / 1px 100% no-repeat;
}

.tree ul ul {
    margin-left: 23px;
}

.node {
    padding-left: 4px;
    background: repeating-linear-gradient(to right, #888 0 1px, transparent 1px 2px) 16px 10px / 5px 1px no-repeat;
}

.node svg {
    margin: 0 5px 0 7px;
}

.plus {
    flex: none;
    width: 11px;
    height: 11px;
    border: 1px solid #919191;
    border-radius: 1px;
    background: linear-gradient(#2b468f, #2b468f) center / 7px 1px no-repeat,
        linear-gradient(#2b468f, #2b468f) center / 1px 7px no-repeat,
        linear-gradient(#fff, #ddd);
}

.minus {
    background: linear-gradient(#2b468f, #2b468f) center / 7px 1px no-repeat,
        linear-gradient(#fff, #ddd);
}

.scrollbar {
    display: flex;
    flex-direction: column;
    align-items: center;
    justify-content: space-between;
    width: 20px;
    padding: 6px 0;
    background-color: #f0f0f0;
}

.scrollbar i {
    flex: 1;
    width: 20px;
    margin: 7px 0 24px;
    background-color: #cdcdcd;
}

.footer {
    display: flex;
    justify-content: flex-end;
    gap: 9px;
    margin-right: -1px;
    padding-top: 11px;
}

.footer .btn {
    width: 86px;
}

.ok-wrap {
    position: relative;
}

.footer .ok {
    border: 2px solid #0078d7;
}
```
